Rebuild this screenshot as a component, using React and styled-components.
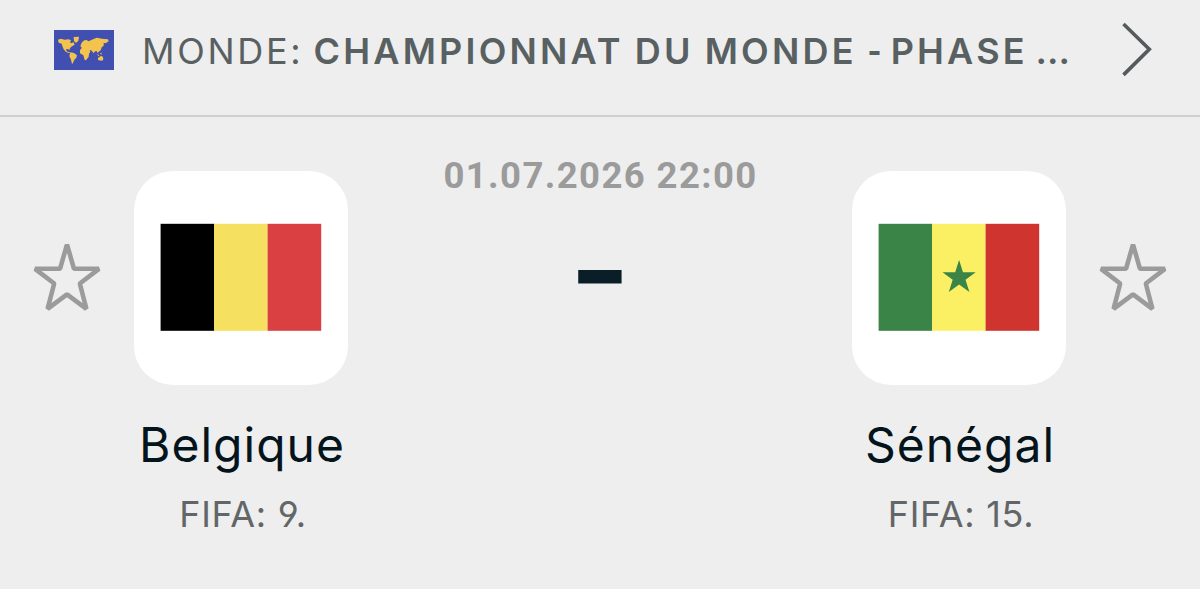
import styled, { createGlobalStyle } from "styled-components";

const teams = {
    home: {
        name: "Belgique",
        rank: "FIFA: 9.",
        stripes: ["#000000", "#f6e05f", "#da4042"],
    },
    away: {
        name: "Sénégal",
        rank: "FIFA: 15.",
        stripes: ["#3a8447", "#fbef63", "#cf352e"],
        star: true,
    },
};

const WorldFlag = () => (
    <svg width="60" height="40" viewBox="0 0 180 120">
        <rect width="180" height="120" fill="#414fb0" />
        <g fill="#f4c34e">
            <path d="M12 29 L21 26 L32 29 L44 28 L51 31 L48 37 L53 40 L58 36 L62 44 L54 49 L48 54 L46 61 L42 57 L36 58 L38 64 L45 67 L49 68 L46 70 L36 66 L29 58 L25 48 L23 41 L14 38 Z" />
            <path d="M59 21 L75 20 L73 32 L66 39 L60 33 Z" />
            <path d="M49 67 L60 69 L69 76 L67 83 L61 89 L57 99 L54 102 L51 89 L46 78 Z" />
            <path d="M80 45 L84 37 L91 31 L97 30 L104 34 L112 30 L128 23 L144 26 L162 28 L164 34 L155 40 L149 38 L149 47 L143 52 L140 61 L134 65 L131 69 L127 62 L122 65 L118 70 L114 62 L107 60 L109 65 L105 71 L104 80 L96 91 L92 90 L88 76 L78 70 L78 60 L84 53 L80 51 Z" />
            <path d="M128 71 L136 76 L134 79 Z M138 70 L143 68 L142 75 Z" />
            <path d="M132 84 L139 79 L144 78 L148 84 L147 91 L142 92 L132 90 Z" />
        </g>
    </svg>
);

const StarIcon = () => (
    <svg width="70" height="70" viewBox="0 0 70 70" fill="none" stroke="#9b9b9b" strokeWidth="4.6" strokeLinejoin="bevel">
        <path d="M35 2.6 L42 26.8 L67 26.8 L47.8 41.5 L54.4 66.8 L35 52.3 L15.6 66.8 L22.2 41.5 L3 26.8 L28 26.8 Z" />
    </svg>
);

const ChevronIcon = () => (
    <svg width="32" height="56" viewBox="0 0 32 56" fill="none" stroke="#555b5d" strokeWidth="3.6">
        <path d="M2.5 2 L28.3 27.3 L2.5 52.9" />
    </svg>
);

const Flag = ({ stripes, star }) => (
    <svg width="162" height="110" viewBox="0 0 162 110">
        {stripes.map((color, i) => (
            <rect key={color} x={0.6 + i * 53.5} y="0.8" width="53.6" height="107" fill={color} />
        ))}
        {star && (
            <path
                d="M81.1 37 L85 49.2 L97.7 49.2 L87.5 56.7 L91.4 69 L81.1 61.5 L70.8 69 L74.7 56.7 L64.5 49.2 L77.2 49.2 Z"
                fill="#3a8447"
            />
        )}
    </svg>
);

const Team = ({ name, rank, stripes, star }) => (
    <TeamColumn>
        <Badge>
            <Flag stripes={stripes} star={star} />
        </Badge>
        <TeamName>{name}</TeamName>
        <Rank>{rank}</Rank>
    </TeamColumn>
);

function App() {
    return (
        <>
            <GlobalStyle />
            <Page>
                <Header>
                    <WorldFlag />
                    <Title>
                        <Country>MONDE:</Country>
                        <Stage>
                            CHAMPIONNAT DU MONDE <Separator>- </Separator>PHASE<Ellipsis> ...</Ellipsis>
                        </Stage>
                    </Title>
                    <ChevronIcon />
                </Header>
                <Match>
                    <Favorite>
                        <StarIcon />
                    </Favorite>
                    <Team {...teams.home} />
                    <Center>
                        <Kickoff>01.07.2026 22:00</Kickoff>
                        <Score>-</Score>
                    </Center>
                    <Team {...teams.away} />
                    <Favorite>
                        <StarIcon />
                    </Favorite>
                </Match>
            </Page>
        </>
    );
}

const GlobalStyle = createGlobalStyle`
    * {
        box-sizing: border-box;
    }
    body {
        margin: 0;
        background: #eeeeee;
        font-family: "Inter", "Roboto", sans-serif;
        font-feature-settings: "cv03", "cv04";
    }
    svg {
        display: block;
        flex-shrink: 0;
    }
`;

const Page = styled.div`
    height: 589px;
    overflow: hidden;
    background: #eeeeee;
`;

const Header = styled.header`
    height: 117px;
    padding: 0 47px 15px 53.5px;
    display: flex;
    align-items: center;
    border-bottom: 2px solid #cfcfcf;
`;

const Title = styled.div`
    flex: 1;
    display: flex;
    align-items: baseline;
    margin: 2px 0 0 28.5px;
    color: #596062;
    font-size: 36px;
    line-height: 44px;
    white-space: nowrap;
`;

const Country = styled.span`
    width: 171.5px;
    font-weight: 400;
    letter-spacing: 2.7px;
`;

const Stage = styled.span`
    font-weight: 600;
    letter-spacing: 3.2px;
    word-spacing: -1.3px;
`;

const Separator = styled.span`
    font-family: "Roboto", sans-serif;
    font-weight: 700;
    letter-spacing: 0.6px;
`;

const Ellipsis = styled.span`
    letter-spacing: 0;
`;

const Match = styled.main`
    display: flex;
    padding-top: 54px;
`;

const Favorite = styled.div`
    width: 134px;
    padding-top: 71px;
    display: flex;
    justify-content: center;
`;

const TeamColumn = styled.section`
    width: 214px;
    display: flex;
    flex-direction: column;
    align-items: center;
    white-space: nowrap;
`;

const Badge = styled.div`
    width: 214px;
    height: 214px;
    border-radius: 39px;
    background: #ffffff;
    display: flex;
    align-items: center;
    justify-content: center;
`;

const TeamName = styled.div`
    margin-top: 32px;
    padding-left: 2px;
    color: #04141c;
    font-size: 48px;
    line-height: 56px;
    letter-spacing: 1px;
`;

const Rank = styled.div`
    margin-top: 19px;
    padding-left: 4px;
    color: #626668;
    font-size: 36px;
    font-weight: 400;
    line-height: 44px;
    letter-spacing: 0.7px;
`;

const Center = styled.div`
    flex: 1;
    display: flex;
    flex-direction: column;
    align-items: center;
    white-space: nowrap;
`;

const Kickoff = styled.div`
    margin-top: -17px;
    padding-left: 1px;
    color: #9b9b9b;
    font-family: "Roboto", sans-serif;
    font-size: 36.5px;
    font-weight: 700;
    line-height: 44px;
    letter-spacing: 1.4px;
`;

const Score = styled.div`
    margin-top: 14px;
    color: #0a1e28;
    font-size: 115px;
    font-weight: 700;
    line-height: 115px;
    transform: scaleX(1.14);
`;

export default App;
